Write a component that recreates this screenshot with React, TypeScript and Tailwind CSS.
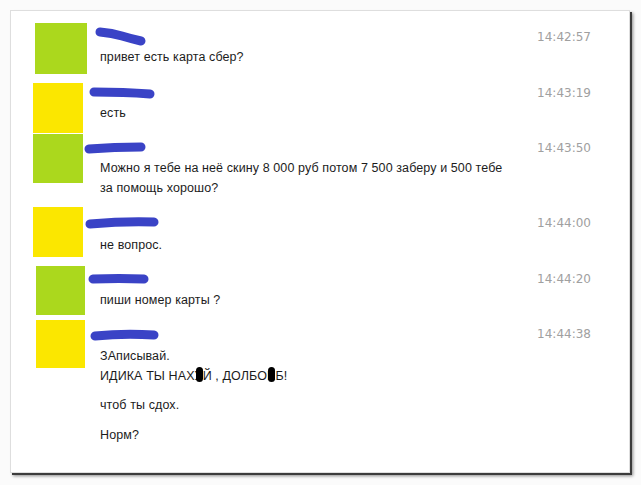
import React from "react";

type Row = {
  color: string;
  rowH: string;
  avatarMl: string;
  avatarSize: string;
  headH: string;
  scribble: string;
  timeMt: string;
  time: string;
  body: React.ReactNode;
};

const green = "bg-[#abd81d]";
const yellow = "bg-[#fbe700]";

function Censor({ ch }: { ch: string }) {
  return (
    <span className="relative inline-block">
      {ch}
      <span className="absolute left-[1px] top-[1px] h-[15px] w-[7px] rounded-full bg-black" />
    </span>
  );
}

const rows: Row[] = [
  {
    color: green,
    rowH: "h-[60px]",
    avatarMl: "ml-[24px]",
    avatarSize: "h-[51px] w-[52px]",
    headH: "h-[24px]",
    scribble: "M16 9 Q 28 10 38 13 T 57 18",
    timeMt: "mt-[6px]",
    time: "14:42:57",
    body: <p>привет есть карта сбер?</p>,
  },
  {
    color: yellow,
    rowH: "h-[51px]",
    avatarMl: "ml-[22px]",
    avatarSize: "h-[50px] w-[50px]",
    headH: "h-[20px]",
    scribble: "M10 9 Q 40 9 66 11",
    timeMt: "mt-[2px]",
    time: "14:43:19",
    body: <p>есть</p>,
  },
  {
    color: green,
    rowH: "h-[73px]",
    avatarMl: "ml-[22px]",
    avatarSize: "h-[49px] w-[50px]",
    headH: "h-[24px]",
    scribble: "M5 15 Q 30 13 57 13",
    timeMt: "mt-[6px]",
    time: "14:43:50",
    body: (
      <p>
        Можно я тебе на неё скину 8 000 руб потом 7 500 заберу и 500 тебе
        <br />
        за помощь хорошо?
      </p>
    ),
  },
  {
    color: yellow,
    rowH: "h-[59px]",
    avatarMl: "ml-[22px]",
    avatarSize: "h-[50px] w-[50px]",
    headH: "h-[28px]",
    scribble: "M6 17 Q 40 14 70 15",
    timeMt: "mt-[8px]",
    time: "14:44:00",
    body: <p>не вопрос.</p>,
  },
  {
    color: green,
    rowH: "h-[54px]",
    avatarMl: "ml-[25px]",
    avatarSize: "h-[49px] w-[49px]",
    headH: "h-[24px]",
    scribble: "M9 13 Q 35 12 60 13",
    timeMt: "mt-[5px]",
    time: "14:44:20",
    body: <p>пиши номер карты ?</p>,
  },
  {
    color: yellow,
    rowH: "h-auto",
    avatarMl: "ml-[25px]",
    avatarSize: "h-[48px] w-[49px]",
    headH: "h-[26px]",
    scribble: "M11 16 Q 40 13 70 15",
    timeMt: "mt-[6px]",
    time: "14:44:38",
    body: (
      <>
        <p>
          ЗАписывай.
          <br />
          ИДИКА ТЫ НАХ<Censor ch="У" />Й , ДОЛБО<Censor ch="Ё" />Б!
        </p>
        <p className="mt-[9px]">чтоб ты сдох.</p>
        <p className="mt-[10px]">Норм?</p>
      </>
    ),
  },
];

export default function App() {
  return (
    <div className="h-[485px] w-[641px] bg-[#fbfbfb] pl-[10px] pt-[10px]">
      <div className="h-[463px] w-[620px] border border-[#dedede] bg-white pt-[12px] shadow-[2px_2px_0_#3c3c3c,3px_3px_3px_#8a8a8a]">
        {rows.map((r) => (
          <div key={r.time} className={`flex ${r.rowH}`}>
            <div className="w-[89px] shrink-0">
              <div className={`${r.avatarMl} ${r.avatarSize} ${r.color}`} />
            </div>
            <div className="flex-1 font-['Liberation_Sans',Arial,sans-serif] text-[12.5px] leading-[20px] tracking-[0.1px] text-[#1c1c1c]">
              <div className={`${r.headH} -ml-[16px]`}>
                <svg width="80" height="30" className="overflow-visible">
                  <path
                    d={r.scribble}
                    fill="none"
                    stroke="#3a43c6"
                    strokeWidth="9"
                    strokeLinecap="round"
                  />
                </svg>
              </div>
              <div className="whitespace-nowrap">{r.body}</div>
            </div>
            <div
              className={`${r.timeMt} mr-[38px] w-[60px] text-right font-['DejaVu_Sans',sans-serif] text-[12px] leading-[16px] text-[#a0a0a0]`}
            >
              {r.time}
            </div>
          </div>
        ))}
      </div>
    </div>
  );
}
